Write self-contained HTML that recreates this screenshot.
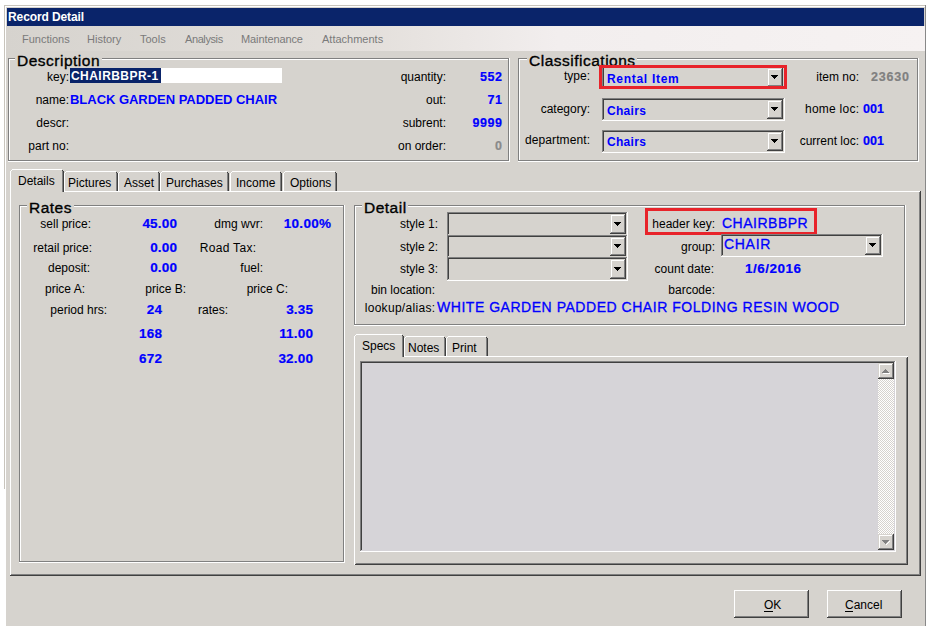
<!DOCTYPE html>
<html><head><meta charset="utf-8"><title>Record Detail</title>
<style>
html,body{margin:0;padding:0;background:#fff;width:931px;height:629px;overflow:hidden;}
body>div{position:absolute;white-space:nowrap;}
</style></head><body>
<div style="left:6px;top:8px;width:919px;height:618px;background:#d6d3ce;"></div>
<div style="left:6px;top:7px;width:919px;height:1px;background:#d6d3ce;"></div>
<div style="left:4px;top:5px;width:922px;height:1px;background:#c8c4bc;"></div>
<div style="left:4px;top:5px;width:1px;height:484px;background:#c8c4bc;"></div>
<div style="left:5px;top:6px;width:920px;height:1px;background:#ffffff;"></div>
<div style="left:5px;top:6px;width:1px;height:483px;background:#ffffff;"></div>
<div style="left:925px;top:5px;width:1px;height:621px;background:#888888;"></div>
<div style="left:7px;top:8px;width:917px;height:18px;background:#0a246a;"></div>
<div style="top:11px;font:bold 12px/12px 'Liberation Sans',sans-serif;color:#fff;letter-spacing:-0.1px;left:8px;">Record Detail</div>
<div style="left:6px;top:26px;width:919px;height:25px;background:#e8e4e0;background:linear-gradient(to right,#d6d3ce 0%,#e4e0dc 40%,#f2eeee 60%,#f6f2f2 100%);"></div>
<div style="top:34px;font:11px/11px 'Liberation Sans',sans-serif;color:#7a7a7a;left:22px;">Functions</div>
<div style="top:34px;font:11px/11px 'Liberation Sans',sans-serif;color:#7a7a7a;left:87px;">History</div>
<div style="top:34px;font:11px/11px 'Liberation Sans',sans-serif;color:#7a7a7a;left:140px;">Tools</div>
<div style="top:34px;font:11px/11px 'Liberation Sans',sans-serif;color:#7a7a7a;letter-spacing:-0.4px;left:185px;">Analysis</div>
<div style="top:34px;font:11px/11px 'Liberation Sans',sans-serif;color:#7a7a7a;letter-spacing:-0.1px;left:241px;">Maintenance</div>
<div style="top:34px;font:11px/11px 'Liberation Sans',sans-serif;color:#7a7a7a;left:322px;">Attachments</div>
<div style="left:8px;top:58px;width:501px;height:1px;background:#808080;"></div>
<div style="left:8px;top:58px;width:1px;height:103px;background:#808080;"></div>
<div style="left:8px;top:160px;width:501px;height:1px;background:#808080;"></div>
<div style="left:508px;top:58px;width:1px;height:103px;background:#808080;"></div>
<div style="left:9px;top:59px;width:499px;height:1px;background:#ffffff;"></div>
<div style="left:9px;top:59px;width:1px;height:101px;background:#ffffff;"></div>
<div style="left:8px;top:161px;width:502px;height:1px;background:#ffffff;"></div>
<div style="left:509px;top:58px;width:1px;height:104px;background:#ffffff;"></div>
<div style="left:15px;top:57px;width:87px;height:4px;background:#d6d3ce;"></div>
<div style="top:53px;font:15.5px/15.5px 'Liberation Sans',sans-serif;color:#000;letter-spacing:0.5px;-webkit-text-stroke:0.35px #000;left:17px;">Description</div>
<div style="top:71px;font:12px/12px 'Liberation Sans',sans-serif;color:#000;right:862px;text-align:right;">key:</div>
<div style="left:70px;top:68px;width:212px;height:15px;background:#ffffff;"></div>
<div style="left:70px;top:68px;width:91px;height:15px;background:#0a246a;"></div>
<div style="top:70px;font:bold 12px/12px 'Liberation Sans',sans-serif;color:#fff;letter-spacing:0.45px;left:71px;">CHAIRBBPR-1</div>
<div style="top:94px;font:12px/12px 'Liberation Sans',sans-serif;color:#000;right:862px;text-align:right;">name:</div>
<div style="top:93px;font:bold 13px/13px 'Liberation Sans',sans-serif;color:#0000ff;letter-spacing:-0.03px;left:70px;">BLACK GARDEN PADDED CHAIR</div>
<div style="top:117px;font:12px/12px 'Liberation Sans',sans-serif;color:#000;right:862px;text-align:right;">descr:</div>
<div style="top:140px;font:12px/12px 'Liberation Sans',sans-serif;color:#000;right:862px;text-align:right;">part no:</div>
<div style="top:71px;font:12px/12px 'Liberation Sans',sans-serif;color:#000;right:485px;text-align:right;">quantity:</div>
<div style="top:71px;font:bold 12.5px/12.5px 'Liberation Sans',sans-serif;color:#0000ff;letter-spacing:0.6px;-webkit-text-stroke:0.2px #0000ff;right:428.4px;text-align:right;">552</div>
<div style="top:94px;font:12px/12px 'Liberation Sans',sans-serif;color:#000;right:485px;text-align:right;">out:</div>
<div style="top:94px;font:bold 12.5px/12.5px 'Liberation Sans',sans-serif;color:#0000ff;letter-spacing:0.6px;-webkit-text-stroke:0.2px #0000ff;right:428.4px;text-align:right;">71</div>
<div style="top:117px;font:12px/12px 'Liberation Sans',sans-serif;color:#000;right:485px;text-align:right;">subrent:</div>
<div style="top:117px;font:bold 12.5px/12.5px 'Liberation Sans',sans-serif;color:#0000ff;letter-spacing:0.6px;-webkit-text-stroke:0.2px #0000ff;right:428.4px;text-align:right;">9999</div>
<div style="top:140px;font:12px/12px 'Liberation Sans',sans-serif;color:#000;right:485px;text-align:right;">on order:</div>
<div style="top:140px;font:bold 12.5px/12.5px 'Liberation Sans',sans-serif;color:#8a8a8a;letter-spacing:0.6px;-webkit-text-stroke:0.2px #8a8a8a;right:428.4px;text-align:right;">0</div>
<div style="left:518px;top:58px;width:400px;height:1px;background:#808080;"></div>
<div style="left:518px;top:58px;width:1px;height:103px;background:#808080;"></div>
<div style="left:518px;top:160px;width:400px;height:1px;background:#808080;"></div>
<div style="left:917px;top:58px;width:1px;height:103px;background:#808080;"></div>
<div style="left:519px;top:59px;width:398px;height:1px;background:#ffffff;"></div>
<div style="left:519px;top:59px;width:1px;height:101px;background:#ffffff;"></div>
<div style="left:518px;top:161px;width:401px;height:1px;background:#ffffff;"></div>
<div style="left:918px;top:58px;width:1px;height:104px;background:#ffffff;"></div>
<div style="left:527px;top:57px;width:110px;height:4px;background:#d6d3ce;"></div>
<div style="top:53px;font:15.5px/15.5px 'Liberation Sans',sans-serif;color:#000;letter-spacing:0.5px;-webkit-text-stroke:0.35px #000;left:529px;">Classifications</div>
<div style="top:70px;font:12px/12px 'Liberation Sans',sans-serif;color:#000;right:341px;text-align:right;">type:</div>
<div style="top:103px;font:12px/12px 'Liberation Sans',sans-serif;color:#000;right:341px;text-align:right;">category:</div>
<div style="top:134px;font:12px/12px 'Liberation Sans',sans-serif;color:#000;letter-spacing:0.1px;right:340.9px;text-align:right;">department:</div>
<div style="left:602px;top:66px;width:183px;height:23px;background:#d6d3ce;"></div>
<div style="left:602px;top:66px;width:182px;height:1px;background:#808080;"></div>
<div style="left:602px;top:66px;width:1px;height:22px;background:#808080;"></div>
<div style="left:603px;top:67px;width:180px;height:1px;background:#404040;"></div>
<div style="left:603px;top:67px;width:1px;height:20px;background:#404040;"></div>
<div style="left:602px;top:88px;width:183px;height:1px;background:#ffffff;"></div>
<div style="left:784px;top:66px;width:1px;height:23px;background:#ffffff;"></div>
<div style="left:767px;top:68px;width:16px;height:19px;background:#d6d3ce;"></div>
<div style="left:767px;top:68px;width:16px;height:1px;background:#d6d3ce;"></div>
<div style="left:767px;top:68px;width:1px;height:19px;background:#d6d3ce;"></div>
<div style="left:768px;top:69px;width:14px;height:1px;background:#ffffff;"></div>
<div style="left:768px;top:69px;width:1px;height:17px;background:#ffffff;"></div>
<div style="left:767px;top:86px;width:16px;height:1px;background:#404040;"></div>
<div style="left:782px;top:68px;width:1px;height:19px;background:#404040;"></div>
<div style="left:768px;top:85px;width:14px;height:1px;background:#808080;"></div>
<div style="left:781px;top:69px;width:1px;height:17px;background:#808080;"></div>
<div style="left:771px;top:75px;width:7px;height:1px;background:#000;"></div>
<div style="left:772px;top:76px;width:5px;height:1px;background:#000;"></div>
<div style="left:773px;top:77px;width:3px;height:1px;background:#000;"></div>
<div style="left:774px;top:78px;width:1px;height:1px;background:#000;"></div>
<div style="top:73px;font:bold 12px/12px 'Liberation Sans',sans-serif;color:#0000ff;letter-spacing:0.7px;left:607px;">Rental Item</div>
<div style="left:599px;top:65px;width:188px;height:3px;background:#e8232a;"></div>
<div style="left:599px;top:86px;width:188px;height:3px;background:#e8232a;"></div>
<div style="left:599px;top:65px;width:3px;height:24px;background:#e8232a;"></div>
<div style="left:784px;top:65px;width:3px;height:24px;background:#e8232a;"></div>
<div style="left:602px;top:98px;width:183px;height:23px;background:#d6d3ce;"></div>
<div style="left:602px;top:98px;width:182px;height:1px;background:#808080;"></div>
<div style="left:602px;top:98px;width:1px;height:22px;background:#808080;"></div>
<div style="left:603px;top:99px;width:180px;height:1px;background:#404040;"></div>
<div style="left:603px;top:99px;width:1px;height:20px;background:#404040;"></div>
<div style="left:602px;top:120px;width:183px;height:1px;background:#ffffff;"></div>
<div style="left:784px;top:98px;width:1px;height:23px;background:#ffffff;"></div>
<div style="left:767px;top:100px;width:16px;height:19px;background:#d6d3ce;"></div>
<div style="left:767px;top:100px;width:16px;height:1px;background:#d6d3ce;"></div>
<div style="left:767px;top:100px;width:1px;height:19px;background:#d6d3ce;"></div>
<div style="left:768px;top:101px;width:14px;height:1px;background:#ffffff;"></div>
<div style="left:768px;top:101px;width:1px;height:17px;background:#ffffff;"></div>
<div style="left:767px;top:118px;width:16px;height:1px;background:#404040;"></div>
<div style="left:782px;top:100px;width:1px;height:19px;background:#404040;"></div>
<div style="left:768px;top:117px;width:14px;height:1px;background:#808080;"></div>
<div style="left:781px;top:101px;width:1px;height:17px;background:#808080;"></div>
<div style="left:771px;top:107px;width:7px;height:1px;background:#000;"></div>
<div style="left:772px;top:108px;width:5px;height:1px;background:#000;"></div>
<div style="left:773px;top:109px;width:3px;height:1px;background:#000;"></div>
<div style="left:774px;top:110px;width:1px;height:1px;background:#000;"></div>
<div style="top:105px;font:bold 12px/12px 'Liberation Sans',sans-serif;color:#0000ff;letter-spacing:0.3px;left:607px;">Chairs</div>
<div style="left:602px;top:130px;width:183px;height:23px;background:#d6d3ce;"></div>
<div style="left:602px;top:130px;width:182px;height:1px;background:#808080;"></div>
<div style="left:602px;top:130px;width:1px;height:22px;background:#808080;"></div>
<div style="left:603px;top:131px;width:180px;height:1px;background:#404040;"></div>
<div style="left:603px;top:131px;width:1px;height:20px;background:#404040;"></div>
<div style="left:602px;top:152px;width:183px;height:1px;background:#ffffff;"></div>
<div style="left:784px;top:130px;width:1px;height:23px;background:#ffffff;"></div>
<div style="left:767px;top:132px;width:16px;height:19px;background:#d6d3ce;"></div>
<div style="left:767px;top:132px;width:16px;height:1px;background:#d6d3ce;"></div>
<div style="left:767px;top:132px;width:1px;height:19px;background:#d6d3ce;"></div>
<div style="left:768px;top:133px;width:14px;height:1px;background:#ffffff;"></div>
<div style="left:768px;top:133px;width:1px;height:17px;background:#ffffff;"></div>
<div style="left:767px;top:150px;width:16px;height:1px;background:#404040;"></div>
<div style="left:782px;top:132px;width:1px;height:19px;background:#404040;"></div>
<div style="left:768px;top:149px;width:14px;height:1px;background:#808080;"></div>
<div style="left:781px;top:133px;width:1px;height:17px;background:#808080;"></div>
<div style="left:771px;top:139px;width:7px;height:1px;background:#000;"></div>
<div style="left:772px;top:140px;width:5px;height:1px;background:#000;"></div>
<div style="left:773px;top:141px;width:3px;height:1px;background:#000;"></div>
<div style="left:774px;top:142px;width:1px;height:1px;background:#000;"></div>
<div style="top:136px;font:bold 12px/12px 'Liberation Sans',sans-serif;color:#0000ff;letter-spacing:0.3px;left:607px;">Chairs</div>
<div style="top:71px;font:12px/12px 'Liberation Sans',sans-serif;color:#000;right:72px;text-align:right;">item no:</div>
<div style="top:71px;font:bold 12.5px/12.5px 'Liberation Sans',sans-serif;color:#808080;letter-spacing:0.8px;-webkit-text-stroke:0.2px #808080;right:21.2px;text-align:right;">23630</div>
<div style="top:103px;font:12px/12px 'Liberation Sans',sans-serif;color:#000;letter-spacing:0.25px;right:71.75px;text-align:right;">home loc:</div>
<div style="top:103px;font:bold 12.5px/12.5px 'Liberation Sans',sans-serif;color:#0000ff;-webkit-text-stroke:0.2px #0000ff;left:863px;">001</div>
<div style="top:135px;font:12px/12px 'Liberation Sans',sans-serif;color:#000;right:72px;text-align:right;">current loc:</div>
<div style="top:135px;font:bold 12.5px/12.5px 'Liberation Sans',sans-serif;color:#0000ff;-webkit-text-stroke:0.2px #0000ff;left:863px;">001</div>
<div style="left:10px;top:191px;width:911px;height:1px;background:#ffffff;"></div>
<div style="left:10px;top:191px;width:1px;height:385px;background:#ffffff;"></div>
<div style="left:10px;top:575px;width:911px;height:1px;background:#404040;"></div>
<div style="left:920px;top:191px;width:1px;height:385px;background:#404040;"></div>
<div style="left:11px;top:574px;width:909px;height:1px;background:#808080;"></div>
<div style="left:919px;top:192px;width:1px;height:383px;background:#808080;"></div>
<div style="left:64px;top:171px;width:54px;height:20px;background:#d6d3ce;"></div>
<div style="left:64px;top:173px;width:1px;height:18px;background:#ffffff;"></div>
<div style="left:66px;top:171px;width:50px;height:1px;background:#ffffff;"></div>
<div style="left:65px;top:172px;width:1px;height:1px;background:#ffffff;"></div>
<div style="left:117px;top:173px;width:1px;height:18px;background:#404040;"></div>
<div style="left:116px;top:172px;width:1px;height:19px;background:#808080;"></div>
<div style="left:116px;top:172px;width:1px;height:1px;background:#404040;"></div>
<div style="top:177px;font:12px/12px 'Liberation Sans',sans-serif;color:#000;left:68px;">Pictures</div>
<div style="left:118px;top:171px;width:42px;height:20px;background:#d6d3ce;"></div>
<div style="left:118px;top:173px;width:1px;height:18px;background:#ffffff;"></div>
<div style="left:120px;top:171px;width:38px;height:1px;background:#ffffff;"></div>
<div style="left:119px;top:172px;width:1px;height:1px;background:#ffffff;"></div>
<div style="left:159px;top:173px;width:1px;height:18px;background:#404040;"></div>
<div style="left:158px;top:172px;width:1px;height:19px;background:#808080;"></div>
<div style="left:158px;top:172px;width:1px;height:1px;background:#404040;"></div>
<div style="top:177px;font:12px/12px 'Liberation Sans',sans-serif;color:#000;left:124px;">Asset</div>
<div style="left:160px;top:171px;width:69px;height:20px;background:#d6d3ce;"></div>
<div style="left:160px;top:173px;width:1px;height:18px;background:#ffffff;"></div>
<div style="left:162px;top:171px;width:65px;height:1px;background:#ffffff;"></div>
<div style="left:161px;top:172px;width:1px;height:1px;background:#ffffff;"></div>
<div style="left:228px;top:173px;width:1px;height:18px;background:#404040;"></div>
<div style="left:227px;top:172px;width:1px;height:19px;background:#808080;"></div>
<div style="left:227px;top:172px;width:1px;height:1px;background:#404040;"></div>
<div style="top:177px;font:12px/12px 'Liberation Sans',sans-serif;color:#000;left:166px;">Purchases</div>
<div style="left:230px;top:171px;width:52px;height:20px;background:#d6d3ce;"></div>
<div style="left:230px;top:173px;width:1px;height:18px;background:#ffffff;"></div>
<div style="left:232px;top:171px;width:48px;height:1px;background:#ffffff;"></div>
<div style="left:231px;top:172px;width:1px;height:1px;background:#ffffff;"></div>
<div style="left:281px;top:173px;width:1px;height:18px;background:#404040;"></div>
<div style="left:280px;top:172px;width:1px;height:19px;background:#808080;"></div>
<div style="left:280px;top:172px;width:1px;height:1px;background:#404040;"></div>
<div style="top:177px;font:12px/12px 'Liberation Sans',sans-serif;color:#000;left:236px;">Income</div>
<div style="left:283px;top:171px;width:54px;height:20px;background:#d6d3ce;"></div>
<div style="left:283px;top:173px;width:1px;height:18px;background:#ffffff;"></div>
<div style="left:285px;top:171px;width:50px;height:1px;background:#ffffff;"></div>
<div style="left:284px;top:172px;width:1px;height:1px;background:#ffffff;"></div>
<div style="left:336px;top:173px;width:1px;height:18px;background:#404040;"></div>
<div style="left:335px;top:172px;width:1px;height:19px;background:#808080;"></div>
<div style="left:335px;top:172px;width:1px;height:1px;background:#404040;"></div>
<div style="top:177px;font:12px/12px 'Liberation Sans',sans-serif;color:#000;left:290px;">Options</div>
<div style="left:10px;top:169px;width:54px;height:23px;background:#d6d3ce;"></div>
<div style="left:10px;top:171px;width:1px;height:21px;background:#ffffff;"></div>
<div style="left:12px;top:169px;width:50px;height:1px;background:#ffffff;"></div>
<div style="left:11px;top:170px;width:1px;height:1px;background:#ffffff;"></div>
<div style="left:63px;top:171px;width:1px;height:21px;background:#404040;"></div>
<div style="left:62px;top:170px;width:1px;height:22px;background:#808080;"></div>
<div style="left:62px;top:170px;width:1px;height:1px;background:#404040;"></div>
<div style="top:175px;font:12px/12px 'Liberation Sans',sans-serif;color:#000;left:18px;">Details</div>
<div style="left:19px;top:205px;width:325px;height:1px;background:#808080;"></div>
<div style="left:19px;top:205px;width:1px;height:357px;background:#808080;"></div>
<div style="left:19px;top:561px;width:325px;height:1px;background:#808080;"></div>
<div style="left:343px;top:205px;width:1px;height:357px;background:#808080;"></div>
<div style="left:20px;top:206px;width:323px;height:1px;background:#ffffff;"></div>
<div style="left:20px;top:206px;width:1px;height:355px;background:#ffffff;"></div>
<div style="left:19px;top:562px;width:326px;height:1px;background:#ffffff;"></div>
<div style="left:344px;top:205px;width:1px;height:358px;background:#ffffff;"></div>
<div style="left:27px;top:204px;width:47px;height:4px;background:#d6d3ce;"></div>
<div style="top:200px;font:15.5px/15.5px 'Liberation Sans',sans-serif;color:#000;letter-spacing:0.5px;-webkit-text-stroke:0.35px #000;left:29px;">Rates</div>
<div style="top:218px;font:12px/12px 'Liberation Sans',sans-serif;color:#000;right:840px;text-align:right;">sell price:</div>
<div style="top:217px;font:bold 13.5px/13.5px 'Liberation Sans',sans-serif;color:#0000ff;letter-spacing:0.2px;-webkit-text-stroke:0.2px #0000ff;right:753.8px;text-align:right;">45.00</div>
<div style="top:218px;font:12px/12px 'Liberation Sans',sans-serif;color:#000;right:668px;text-align:right;">dmg wvr:</div>
<div style="top:217px;font:bold 13.5px/13.5px 'Liberation Sans',sans-serif;color:#0000ff;letter-spacing:0.3px;-webkit-text-stroke:0.2px #0000ff;right:599.7px;text-align:right;">10.00%</div>
<div style="top:242px;font:12px/12px 'Liberation Sans',sans-serif;color:#000;right:839px;text-align:right;">retail price:</div>
<div style="top:241px;font:bold 13.5px/13.5px 'Liberation Sans',sans-serif;color:#0000ff;letter-spacing:0.2px;-webkit-text-stroke:0.2px #0000ff;right:753.8px;text-align:right;">0.00</div>
<div style="top:242px;font:12px/12px 'Liberation Sans',sans-serif;color:#000;letter-spacing:0.3px;right:674.7px;text-align:right;">Road Tax:</div>
<div style="top:262px;font:12px/12px 'Liberation Sans',sans-serif;color:#000;right:841px;text-align:right;">deposit:</div>
<div style="top:261px;font:bold 13.5px/13.5px 'Liberation Sans',sans-serif;color:#0000ff;letter-spacing:0.2px;-webkit-text-stroke:0.2px #0000ff;right:753.8px;text-align:right;">0.00</div>
<div style="top:262px;font:12px/12px 'Liberation Sans',sans-serif;color:#000;right:668px;text-align:right;">fuel:</div>
<div style="top:283px;font:12px/12px 'Liberation Sans',sans-serif;color:#000;right:846px;text-align:right;">price A:</div>
<div style="top:283px;font:12px/12px 'Liberation Sans',sans-serif;color:#000;right:745px;text-align:right;">price B:</div>
<div style="top:283px;font:12px/12px 'Liberation Sans',sans-serif;color:#000;right:643px;text-align:right;">price C:</div>
<div style="top:304px;font:12px/12px 'Liberation Sans',sans-serif;color:#000;right:824px;text-align:right;">period hrs:</div>
<div style="top:303px;font:bold 13.5px/13.5px 'Liberation Sans',sans-serif;color:#0000ff;letter-spacing:0.2px;-webkit-text-stroke:0.2px #0000ff;right:768.8px;text-align:right;">24</div>
<div style="top:304px;font:12px/12px 'Liberation Sans',sans-serif;color:#000;right:703px;text-align:right;">rates:</div>
<div style="top:303px;font:bold 13.5px/13.5px 'Liberation Sans',sans-serif;color:#0000ff;letter-spacing:0.2px;-webkit-text-stroke:0.2px #0000ff;right:617.8px;text-align:right;">3.35</div>
<div style="top:327px;font:bold 13.5px/13.5px 'Liberation Sans',sans-serif;color:#0000ff;letter-spacing:0.2px;-webkit-text-stroke:0.2px #0000ff;right:768.8px;text-align:right;">168</div>
<div style="top:327px;font:bold 13.5px/13.5px 'Liberation Sans',sans-serif;color:#0000ff;letter-spacing:0.2px;-webkit-text-stroke:0.2px #0000ff;right:617.8px;text-align:right;">11.00</div>
<div style="top:352px;font:bold 13.5px/13.5px 'Liberation Sans',sans-serif;color:#0000ff;letter-spacing:0.2px;-webkit-text-stroke:0.2px #0000ff;right:768.8px;text-align:right;">672</div>
<div style="top:352px;font:bold 13.5px/13.5px 'Liberation Sans',sans-serif;color:#0000ff;letter-spacing:0.2px;-webkit-text-stroke:0.2px #0000ff;right:617.8px;text-align:right;">32.00</div>
<div style="left:354px;top:205px;width:551px;height:1px;background:#808080;"></div>
<div style="left:354px;top:205px;width:1px;height:120px;background:#808080;"></div>
<div style="left:354px;top:324px;width:551px;height:1px;background:#808080;"></div>
<div style="left:904px;top:205px;width:1px;height:120px;background:#808080;"></div>
<div style="left:355px;top:206px;width:549px;height:1px;background:#ffffff;"></div>
<div style="left:355px;top:206px;width:1px;height:118px;background:#ffffff;"></div>
<div style="left:354px;top:325px;width:552px;height:1px;background:#ffffff;"></div>
<div style="left:905px;top:205px;width:1px;height:121px;background:#ffffff;"></div>
<div style="left:362px;top:204px;width:46px;height:4px;background:#d6d3ce;"></div>
<div style="top:200px;font:15.5px/15.5px 'Liberation Sans',sans-serif;color:#000;letter-spacing:0.5px;-webkit-text-stroke:0.35px #000;left:364px;">Detail</div>
<div style="top:218px;font:12px/12px 'Liberation Sans',sans-serif;color:#000;right:493px;text-align:right;">style 1:</div>
<div style="top:241px;font:12px/12px 'Liberation Sans',sans-serif;color:#000;right:493px;text-align:right;">style 2:</div>
<div style="top:263px;font:12px/12px 'Liberation Sans',sans-serif;color:#000;right:493px;text-align:right;">style 3:</div>
<div style="left:447px;top:212px;width:181px;height:24px;background:#d6d3ce;"></div>
<div style="left:447px;top:212px;width:180px;height:1px;background:#808080;"></div>
<div style="left:447px;top:212px;width:1px;height:23px;background:#808080;"></div>
<div style="left:448px;top:213px;width:178px;height:1px;background:#404040;"></div>
<div style="left:448px;top:213px;width:1px;height:21px;background:#404040;"></div>
<div style="left:447px;top:235px;width:181px;height:1px;background:#ffffff;"></div>
<div style="left:627px;top:212px;width:1px;height:24px;background:#ffffff;"></div>
<div style="left:610px;top:214px;width:16px;height:20px;background:#d6d3ce;"></div>
<div style="left:610px;top:214px;width:16px;height:1px;background:#d6d3ce;"></div>
<div style="left:610px;top:214px;width:1px;height:20px;background:#d6d3ce;"></div>
<div style="left:611px;top:215px;width:14px;height:1px;background:#ffffff;"></div>
<div style="left:611px;top:215px;width:1px;height:18px;background:#ffffff;"></div>
<div style="left:610px;top:233px;width:16px;height:1px;background:#404040;"></div>
<div style="left:625px;top:214px;width:1px;height:20px;background:#404040;"></div>
<div style="left:611px;top:232px;width:14px;height:1px;background:#808080;"></div>
<div style="left:624px;top:215px;width:1px;height:18px;background:#808080;"></div>
<div style="left:614px;top:222px;width:7px;height:1px;background:#000;"></div>
<div style="left:615px;top:223px;width:5px;height:1px;background:#000;"></div>
<div style="left:616px;top:224px;width:3px;height:1px;background:#000;"></div>
<div style="left:617px;top:225px;width:1px;height:1px;background:#000;"></div>
<div style="left:447px;top:235px;width:181px;height:23px;background:#d6d3ce;"></div>
<div style="left:447px;top:235px;width:180px;height:1px;background:#808080;"></div>
<div style="left:447px;top:235px;width:1px;height:22px;background:#808080;"></div>
<div style="left:448px;top:236px;width:178px;height:1px;background:#404040;"></div>
<div style="left:448px;top:236px;width:1px;height:20px;background:#404040;"></div>
<div style="left:447px;top:257px;width:181px;height:1px;background:#ffffff;"></div>
<div style="left:627px;top:235px;width:1px;height:23px;background:#ffffff;"></div>
<div style="left:610px;top:237px;width:16px;height:19px;background:#d6d3ce;"></div>
<div style="left:610px;top:237px;width:16px;height:1px;background:#d6d3ce;"></div>
<div style="left:610px;top:237px;width:1px;height:19px;background:#d6d3ce;"></div>
<div style="left:611px;top:238px;width:14px;height:1px;background:#ffffff;"></div>
<div style="left:611px;top:238px;width:1px;height:17px;background:#ffffff;"></div>
<div style="left:610px;top:255px;width:16px;height:1px;background:#404040;"></div>
<div style="left:625px;top:237px;width:1px;height:19px;background:#404040;"></div>
<div style="left:611px;top:254px;width:14px;height:1px;background:#808080;"></div>
<div style="left:624px;top:238px;width:1px;height:17px;background:#808080;"></div>
<div style="left:614px;top:244px;width:7px;height:1px;background:#000;"></div>
<div style="left:615px;top:245px;width:5px;height:1px;background:#000;"></div>
<div style="left:616px;top:246px;width:3px;height:1px;background:#000;"></div>
<div style="left:617px;top:247px;width:1px;height:1px;background:#000;"></div>
<div style="left:447px;top:257px;width:181px;height:24px;background:#d6d3ce;"></div>
<div style="left:447px;top:257px;width:180px;height:1px;background:#808080;"></div>
<div style="left:447px;top:257px;width:1px;height:23px;background:#808080;"></div>
<div style="left:448px;top:258px;width:178px;height:1px;background:#404040;"></div>
<div style="left:448px;top:258px;width:1px;height:21px;background:#404040;"></div>
<div style="left:447px;top:280px;width:181px;height:1px;background:#ffffff;"></div>
<div style="left:627px;top:257px;width:1px;height:24px;background:#ffffff;"></div>
<div style="left:610px;top:259px;width:16px;height:20px;background:#d6d3ce;"></div>
<div style="left:610px;top:259px;width:16px;height:1px;background:#d6d3ce;"></div>
<div style="left:610px;top:259px;width:1px;height:20px;background:#d6d3ce;"></div>
<div style="left:611px;top:260px;width:14px;height:1px;background:#ffffff;"></div>
<div style="left:611px;top:260px;width:1px;height:18px;background:#ffffff;"></div>
<div style="left:610px;top:278px;width:16px;height:1px;background:#404040;"></div>
<div style="left:625px;top:259px;width:1px;height:20px;background:#404040;"></div>
<div style="left:611px;top:277px;width:14px;height:1px;background:#808080;"></div>
<div style="left:624px;top:260px;width:1px;height:18px;background:#808080;"></div>
<div style="left:614px;top:267px;width:7px;height:1px;background:#000;"></div>
<div style="left:615px;top:268px;width:5px;height:1px;background:#000;"></div>
<div style="left:616px;top:269px;width:3px;height:1px;background:#000;"></div>
<div style="left:617px;top:270px;width:1px;height:1px;background:#000;"></div>
<div style="top:284px;font:12px/12px 'Liberation Sans',sans-serif;color:#000;right:496px;text-align:right;">bin location:</div>
<div style="top:302px;font:12px/12px 'Liberation Sans',sans-serif;color:#000;letter-spacing:0.3px;right:495.7px;text-align:right;">lookup/alias:</div>
<div style="top:300px;font:14px/14px 'Liberation Sans',sans-serif;color:#0000ff;letter-spacing:0.53px;-webkit-text-stroke:0.3px #0000ff;left:437px;">WHITE GARDEN PADDED CHAIR FOLDING RESIN WOOD</div>
<div style="top:218px;font:12px/12px 'Liberation Sans',sans-serif;color:#000;right:216px;text-align:right;">header key:</div>
<div style="top:216px;font:14px/14px 'Liberation Sans',sans-serif;color:#0000ff;letter-spacing:0.5px;-webkit-text-stroke:0.3px #0000ff;left:722px;">CHAIRBBPR</div>
<div style="left:645px;top:208px;width:172px;height:3px;background:#e8232a;"></div>
<div style="left:645px;top:232px;width:172px;height:3px;background:#e8232a;"></div>
<div style="left:645px;top:208px;width:3px;height:27px;background:#e8232a;"></div>
<div style="left:814px;top:208px;width:3px;height:27px;background:#e8232a;"></div>
<div style="top:241px;font:12px/12px 'Liberation Sans',sans-serif;color:#000;right:216px;text-align:right;">group:</div>
<div style="left:721px;top:234px;width:162px;height:23px;background:#d6d3ce;"></div>
<div style="left:721px;top:234px;width:161px;height:1px;background:#808080;"></div>
<div style="left:721px;top:234px;width:1px;height:22px;background:#808080;"></div>
<div style="left:722px;top:235px;width:159px;height:1px;background:#404040;"></div>
<div style="left:722px;top:235px;width:1px;height:20px;background:#404040;"></div>
<div style="left:721px;top:256px;width:162px;height:1px;background:#ffffff;"></div>
<div style="left:882px;top:234px;width:1px;height:23px;background:#ffffff;"></div>
<div style="left:865px;top:236px;width:16px;height:19px;background:#d6d3ce;"></div>
<div style="left:865px;top:236px;width:16px;height:1px;background:#d6d3ce;"></div>
<div style="left:865px;top:236px;width:1px;height:19px;background:#d6d3ce;"></div>
<div style="left:866px;top:237px;width:14px;height:1px;background:#ffffff;"></div>
<div style="left:866px;top:237px;width:1px;height:17px;background:#ffffff;"></div>
<div style="left:865px;top:254px;width:16px;height:1px;background:#404040;"></div>
<div style="left:880px;top:236px;width:1px;height:19px;background:#404040;"></div>
<div style="left:866px;top:253px;width:14px;height:1px;background:#808080;"></div>
<div style="left:879px;top:237px;width:1px;height:17px;background:#808080;"></div>
<div style="left:869px;top:243px;width:7px;height:1px;background:#000;"></div>
<div style="left:870px;top:244px;width:5px;height:1px;background:#000;"></div>
<div style="left:871px;top:245px;width:3px;height:1px;background:#000;"></div>
<div style="left:872px;top:246px;width:1px;height:1px;background:#000;"></div>
<div style="top:237px;font:14px/14px 'Liberation Sans',sans-serif;color:#0000ff;letter-spacing:0.7px;-webkit-text-stroke:0.3px #0000ff;left:724px;">CHAIR</div>
<div style="top:263px;font:12px/12px 'Liberation Sans',sans-serif;color:#000;right:217px;text-align:right;">count date:</div>
<div style="top:262px;font:bold 13.5px/13.5px 'Liberation Sans',sans-serif;color:#0000ff;letter-spacing:0.5px;-webkit-text-stroke:0.2px #0000ff;left:745px;">1/6/2016</div>
<div style="top:284px;font:12px/12px 'Liberation Sans',sans-serif;color:#000;right:216px;text-align:right;">barcode:</div>
<div style="left:354px;top:356px;width:554px;height:1px;background:#ffffff;"></div>
<div style="left:354px;top:356px;width:1px;height:209px;background:#ffffff;"></div>
<div style="left:355px;top:564px;width:553px;height:1px;background:#404040;"></div>
<div style="left:907px;top:357px;width:1px;height:208px;background:#404040;"></div>
<div style="left:356px;top:563px;width:551px;height:1px;background:#808080;"></div>
<div style="left:906px;top:358px;width:1px;height:206px;background:#808080;"></div>
<div style="left:404px;top:336px;width:42px;height:20px;background:#d6d3ce;"></div>
<div style="left:404px;top:338px;width:1px;height:18px;background:#ffffff;"></div>
<div style="left:406px;top:336px;width:38px;height:1px;background:#ffffff;"></div>
<div style="left:405px;top:337px;width:1px;height:1px;background:#ffffff;"></div>
<div style="left:445px;top:338px;width:1px;height:18px;background:#404040;"></div>
<div style="left:444px;top:337px;width:1px;height:19px;background:#808080;"></div>
<div style="left:444px;top:337px;width:1px;height:1px;background:#404040;"></div>
<div style="top:342px;font:12px/12px 'Liberation Sans',sans-serif;color:#000;left:408px;">Notes</div>
<div style="left:446px;top:336px;width:42px;height:20px;background:#d6d3ce;"></div>
<div style="left:446px;top:338px;width:1px;height:18px;background:#ffffff;"></div>
<div style="left:448px;top:336px;width:38px;height:1px;background:#ffffff;"></div>
<div style="left:447px;top:337px;width:1px;height:1px;background:#ffffff;"></div>
<div style="left:487px;top:338px;width:1px;height:18px;background:#404040;"></div>
<div style="left:486px;top:337px;width:1px;height:19px;background:#808080;"></div>
<div style="left:486px;top:337px;width:1px;height:1px;background:#404040;"></div>
<div style="top:342px;font:12px/12px 'Liberation Sans',sans-serif;color:#000;left:452px;">Print</div>
<div style="left:354px;top:334px;width:50px;height:23px;background:#d6d3ce;"></div>
<div style="left:354px;top:336px;width:1px;height:21px;background:#ffffff;"></div>
<div style="left:356px;top:334px;width:46px;height:1px;background:#ffffff;"></div>
<div style="left:355px;top:335px;width:1px;height:1px;background:#ffffff;"></div>
<div style="left:403px;top:336px;width:1px;height:21px;background:#404040;"></div>
<div style="left:402px;top:335px;width:1px;height:22px;background:#808080;"></div>
<div style="left:402px;top:335px;width:1px;height:1px;background:#404040;"></div>
<div style="top:340px;font:12px/12px 'Liberation Sans',sans-serif;color:#000;left:362px;">Specs</div>
<div style="left:360px;top:361px;width:536px;height:191px;background:#d6d4d8;"></div>
<div style="left:360px;top:361px;width:535px;height:1px;background:#808080;"></div>
<div style="left:360px;top:361px;width:1px;height:190px;background:#808080;"></div>
<div style="left:361px;top:362px;width:533px;height:1px;background:#404040;"></div>
<div style="left:361px;top:362px;width:1px;height:188px;background:#404040;"></div>
<div style="left:360px;top:551px;width:536px;height:1px;background:#ffffff;"></div>
<div style="left:895px;top:361px;width:1px;height:191px;background:#ffffff;"></div>
<div style="left:878px;top:363px;width:16px;height:187px;background:#fff;background-color:#fff;background-image:repeating-conic-gradient(#d6d3ce 0 25%,#fff 0 50%);background-size:2px 2px;"></div>
<div style="left:878px;top:363px;width:16px;height:16px;background:#d6d3ce;"></div>
<div style="left:878px;top:363px;width:16px;height:1px;background:#d6d3ce;"></div>
<div style="left:878px;top:363px;width:1px;height:16px;background:#d6d3ce;"></div>
<div style="left:879px;top:364px;width:14px;height:1px;background:#ffffff;"></div>
<div style="left:879px;top:364px;width:1px;height:14px;background:#ffffff;"></div>
<div style="left:878px;top:378px;width:16px;height:1px;background:#404040;"></div>
<div style="left:893px;top:363px;width:1px;height:16px;background:#404040;"></div>
<div style="left:879px;top:377px;width:14px;height:1px;background:#808080;"></div>
<div style="left:892px;top:364px;width:1px;height:14px;background:#808080;"></div>
<div style="left:878px;top:534px;width:16px;height:16px;background:#d6d3ce;"></div>
<div style="left:878px;top:534px;width:16px;height:1px;background:#d6d3ce;"></div>
<div style="left:878px;top:534px;width:1px;height:16px;background:#d6d3ce;"></div>
<div style="left:879px;top:535px;width:14px;height:1px;background:#ffffff;"></div>
<div style="left:879px;top:535px;width:1px;height:14px;background:#ffffff;"></div>
<div style="left:878px;top:549px;width:16px;height:1px;background:#404040;"></div>
<div style="left:893px;top:534px;width:1px;height:16px;background:#404040;"></div>
<div style="left:879px;top:548px;width:14px;height:1px;background:#808080;"></div>
<div style="left:892px;top:535px;width:1px;height:14px;background:#808080;"></div>
<div style="left:885px;top:369px;width:1px;height:1px;background:#808080;"></div>
<div style="left:884px;top:370px;width:3px;height:1px;background:#808080;"></div>
<div style="left:883px;top:371px;width:5px;height:1px;background:#808080;"></div>
<div style="left:882px;top:372px;width:7px;height:1px;background:#808080;"></div>
<div style="left:883px;top:373px;width:7px;height:1px;background:#ffffff;"></div>
<div style="left:882px;top:540px;width:7px;height:1px;background:#808080;"></div>
<div style="left:883px;top:541px;width:5px;height:1px;background:#808080;"></div>
<div style="left:884px;top:542px;width:3px;height:1px;background:#808080;"></div>
<div style="left:885px;top:543px;width:1px;height:1px;background:#808080;"></div>
<div style="left:886px;top:544px;width:1px;height:1px;background:#ffffff;"></div>
<div style="left:887px;top:543px;width:1px;height:1px;background:#ffffff;"></div>
<div style="left:888px;top:542px;width:1px;height:1px;background:#ffffff;"></div>
<div style="left:889px;top:541px;width:1px;height:1px;background:#ffffff;"></div>
<div style="left:734px;top:590px;width:75px;height:28px;background:#d6d3ce;"></div>
<div style="left:734px;top:590px;width:74px;height:1px;background:#ffffff;"></div>
<div style="left:734px;top:590px;width:1px;height:27px;background:#ffffff;"></div>
<div style="left:734px;top:617px;width:75px;height:1px;background:#404040;"></div>
<div style="left:808px;top:590px;width:1px;height:28px;background:#404040;"></div>
<div style="left:735px;top:616px;width:73px;height:1px;background:#808080;"></div>
<div style="left:807px;top:591px;width:1px;height:26px;background:#808080;"></div>
<div style="top:599px;font:12px/12px 'Liberation Sans',sans-serif;color:#000;left:764px;">OK</div>
<div style="left:764px;top:611px;width:9px;height:1px;background:#000;"></div>
<div style="left:827px;top:590px;width:75px;height:28px;background:#d6d3ce;"></div>
<div style="left:827px;top:590px;width:74px;height:1px;background:#ffffff;"></div>
<div style="left:827px;top:590px;width:1px;height:27px;background:#ffffff;"></div>
<div style="left:827px;top:617px;width:75px;height:1px;background:#404040;"></div>
<div style="left:901px;top:590px;width:1px;height:28px;background:#404040;"></div>
<div style="left:828px;top:616px;width:73px;height:1px;background:#808080;"></div>
<div style="left:900px;top:591px;width:1px;height:26px;background:#808080;"></div>
<div style="top:599px;font:12px/12px 'Liberation Sans',sans-serif;color:#000;left:845px;">Cancel</div>
<div style="left:845px;top:611px;width:8px;height:1px;background:#000;"></div>
</body></html>
